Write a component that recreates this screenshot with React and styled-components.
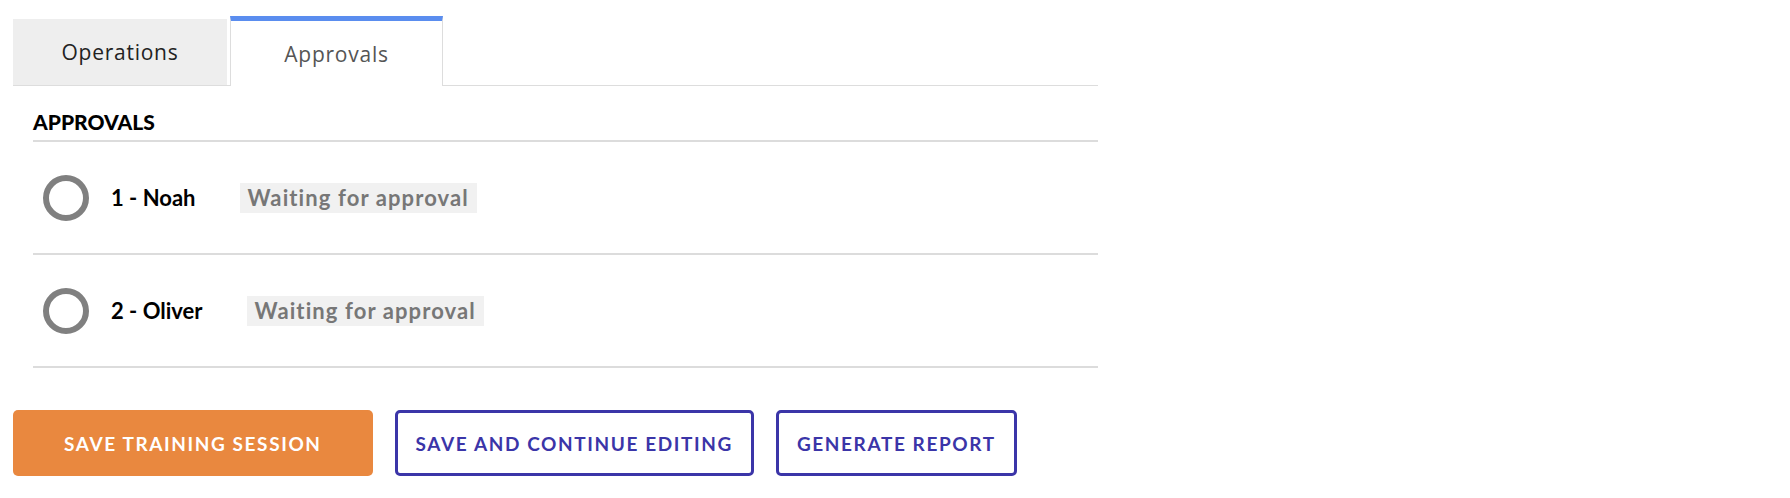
import React from "react";
import styled, { createGlobalStyle, css } from "styled-components";

const GlobalStyle = createGlobalStyle`
  html, body {
    margin: 0;
    padding: 0;
    background: #ffffff;
  }
  body {
    font-family: "Lato", "Noto Sans", sans-serif;
    color: #000;
  }
  * { box-sizing: border-box; }
`;

const Page = styled.div`
  width: 1098px;
  padding: 16px 0 0 13px;
`;

const TabBar = styled.div`
  display: flex;
  align-items: flex-end;
  gap: 3px;
  height: 70px;
  border-bottom: 1px solid #dddddd;
`;

const Tab = styled.div`
  display: flex;
  align-items: center;
  justify-content: center;
  font-family: "Open Sans", "Noto Sans", sans-serif;
  font-size: 21px;
  letter-spacing: 0.75px;
  ${(p) =>
    p.$active
      ? css`
          width: 213px;
          height: 70px;
          margin-bottom: -1px;
          background: #ffffff;
          color: #555555;
          border-top: 5px solid #5a8def;
          border-left: 1px solid #dddddd;
          border-right: 1px solid #dddddd;
        `
      : css`
          width: 214px;
          height: 66px;
          background: #eeeeee;
          color: #222222;
        `}
`;

const Section = styled.section`
  padding-left: 20px;
  margin-top: 23px;
`;

const SectionTitle = styled.h2`
  margin: 0;
  font-family: "Lato", sans-serif;
  font-weight: 900;
  font-size: 21px;
  line-height: 26px;
  padding-bottom: 5px;
  color: #000;
  border-bottom: 2px solid #dcdcdc;
`;

const List = styled.div`
  display: flex;
  flex-direction: column;
`;

const Row = styled.div`
  display: flex;
  align-items: center;
  height: 113px;
  padding-left: 10px;
  border-bottom: 2px solid #dcdcdc;
`;

const StatusRing = styled.span`
  flex: none;
  width: 46px;
  height: 46px;
  border-radius: 50%;
  border: 6px solid #808080;
`;

const Name = styled.span`
  margin-left: 22px;
  font-family: "Lato", sans-serif;
  font-weight: 700;
  font-size: 22px;
  color: #000;
`;

const Badge = styled.span`
  margin-left: 44px;
  height: 30px;
  padding: 0 8px;
  display: inline-flex;
  align-items: center;
  background: #f1f1f1;
  color: #777777;
  font-family: "Lato", sans-serif;
  font-weight: 700;
  font-size: 22px;
  letter-spacing: 1.1px;
`;

const Actions = styled.div`
  display: flex;
  gap: 22px;
  margin-top: 42px;
`;

const Button = styled.button`
  height: 66px;
  border-radius: 5px;
  font-family: "Lato", sans-serif;
  font-weight: 700;
  font-size: 19px;
  letter-spacing: 1.6px;
  text-transform: uppercase;
  cursor: pointer;
  ${(p) =>
    p.$variant === "primary"
      ? css`
          padding: 0 51px;
          background: #e9883f;
          color: #ffffff;
          border: none;
        `
      : css`
          padding: 0 18px;
          background: #ffffff;
          color: #3b35a8;
          border: 3px solid #3b35a8;
        `}
`;

const approvals = [
  { id: 1, name: "Noah", status: "Waiting for approval" },
  { id: 2, name: "Oliver", status: "Waiting for approval" },
];

export default function App() {
  return (
    <>
      <GlobalStyle />
      <Page>
        <TabBar>
          <Tab>Operations</Tab>
          <Tab $active>Approvals</Tab>
        </TabBar>
        <Section>
          <SectionTitle>APPROVALS</SectionTitle>
          <List>
            {approvals.map((a) => (
              <Row key={a.id}>
                <StatusRing />
                <Name>
                  {a.id} - {a.name}
                </Name>
                <Badge>{a.status}</Badge>
              </Row>
            ))}
          </List>
        </Section>
        <Actions>
          <Button $variant="primary">Save training session</Button>
          <Button>Save and continue editing</Button>
          <Button>Generate report</Button>
        </Actions>
      </Page>
    </>
  );
}
